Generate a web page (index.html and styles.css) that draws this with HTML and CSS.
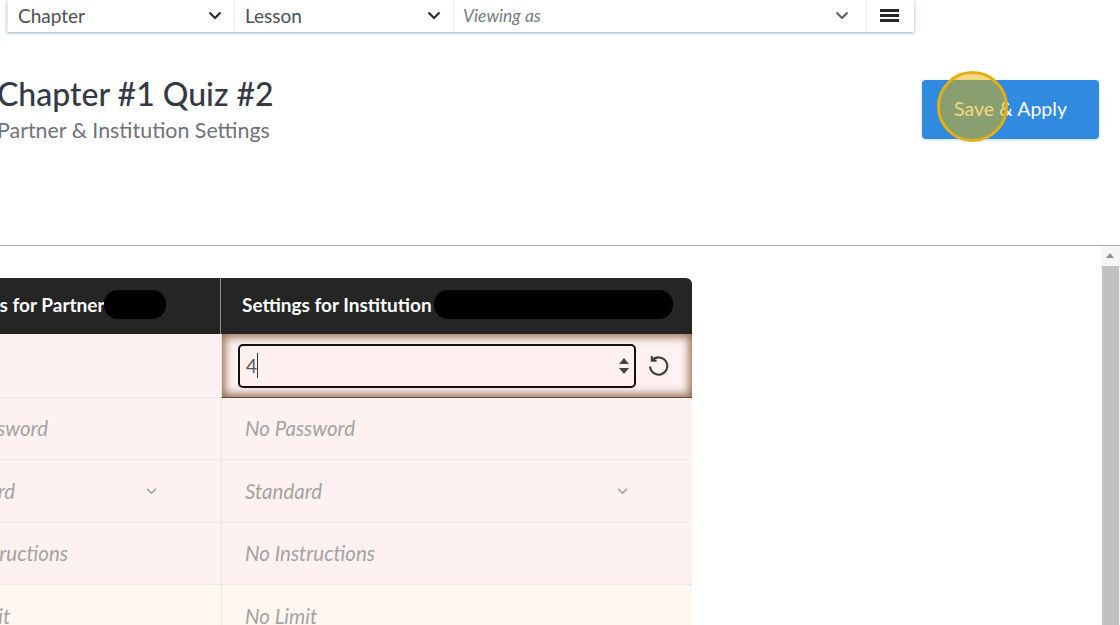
FILE: index.html
```html
<!DOCTYPE html>
<html>

<head>
    <link rel="stylesheet" href="styles.css">
</head>

<body>
    <div class="toolbar">
        <div class="tool-cell chapter-cell">
            <span>Chapter</span>
            <svg class="chev" viewBox="0 0 14 9"><path d="M1.5 1.5 7 7l5.5-5.5"/></svg>
        </div>
        <div class="tool-cell lesson-cell">
            <span>Lesson</span>
            <svg class="chev" viewBox="0 0 14 9"><path d="M1.5 1.5 7 7l5.5-5.5"/></svg>
        </div>
        <div class="tool-cell viewing-cell">
            <span class="viewing">Viewing as</span>
            <svg class="chev chev-gray" viewBox="0 0 14 9"><path d="M1.5 1.5 7 7l5.5-5.5"/></svg>
        </div>
        <div class="tool-cell menu-cell">
            <div class="burger"><i></i><i></i><i></i></div>
        </div>
    </div>

    <div class="page-head">
        <div class="titles">
            <h1>Chapter #1 Quiz #2</h1>
            <p>Partner &amp; Institution Settings</p>
        </div>
        <button class="save-btn">Save &amp; Apply<span class="click-mark"></span></button>
    </div>

    <div class="scroll-area">
        <div class="table-wrap">
            <div class="settings-table">
                <div class="th th-partner"><span>Settings for Partner</span><b class="redact redact-small"></b></div>
                <div class="th th-inst"><span>Settings for Institution</span><b class="redact redact-big"></b></div>

                <div class="td rose"></div>
                <div class="td rose td-focus">
                    <div class="num-input">
                        <span class="num-value">4</span>
                        <svg class="spin" viewBox="0 0 12 20"><path d="M6 2 11 8H1zM6 18 1 12h10z"/></svg>
                    </div>
                    <svg class="reset" viewBox="0 0 24 24"><path d="M5.5 6.5A9 9 0 1 1 3.2 13"/><path d="M5 2v5h5"/></svg>
                </div>

                <div class="td rose muted">No Password</div>
                <div class="td rose muted">No Password</div>

                <div class="td rose muted select-cell">Standard<svg class="chev chev-small" viewBox="0 0 14 9"><path d="M2 2 7 7l5-5"/></svg></div>
                <div class="td rose muted select-cell">Standard<svg class="chev chev-small" viewBox="0 0 14 9"><path d="M2 2 7 7l5-5"/></svg></div>

                <div class="td rose muted">No Instructions</div>
                <div class="td rose muted">No Instructions</div>

                <div class="td cream muted">No Limit</div>
                <div class="td cream muted">No Limit</div>
            </div>
        </div>
        <div class="scrollbar">
            <div class="scroll-up"></div>
            <div class="scroll-thumb"></div>
        </div>
    </div>
</body>

</html>
```

FILE: styles.css
```css
* {
    box-sizing: border-box;
}

html,
body {
    height: 100%;
}

body {
    margin: 0;
    overflow: hidden;
    background-color: white;
    font-family: Lato, "Open Sans", sans-serif;
    display: flex;
    flex-direction: column;
}

/* top bar */
.toolbar {
    display: flex;
    width: 907px;
    height: 32px;
    margin-left: 7px;
    flex: none;
    background-color: white;
    box-shadow: 0 1px 3px rgba(70, 100, 130, 0.55);
}

.tool-cell {
    display: flex;
    align-items: center;
    justify-content: space-between;
    height: 31px;
    padding-bottom: 1px;
    border-left: 1px solid #e9ecef;
    color: #4c4f54;
    font-size: 19px;
}

.chapter-cell {
    width: 227px;
    padding: 0 12px 1px 10px;
}

.lesson-cell {
    width: 219px;
    padding: 0 12px 1px 10px;
}

.viewing-cell {
    width: 413px;
    padding: 0 17px 1px 9px;
}

.menu-cell {
    width: 48px;
    justify-content: center;
}

.viewing {
    font-size: 17.5px;
    font-style: italic;
    color: #777a80;
}

.chev {
    width: 14px;
    height: 9px;
    fill: none;
    stroke: #2b2b2b;
    stroke-width: 2.2;
}

.chev-gray {
    stroke: #60646a;
}

.chev-small {
    width: 13px;
    height: 8px;
    stroke: #a09b9b;
    stroke-width: 1.8;
}

.burger {
    width: 19px;
    margin-right: 2px;
}

.burger i {
    display: block;
    height: 3px;
    margin: 2px 0;
    background-color: #26282c;
}

/* title and button */
.page-head {
    display: flex;
    justify-content: space-between;
    height: 214px;
    flex: none;
    margin-left: -3px;
    padding: 41px 21px 0 0;
    border-bottom: 1px solid #a9a9a9;
}

h1 {
    margin: 0;
    font-size: 32px;
    line-height: 41px;
    font-weight: 500;
    color: #333945;
}

.titles p {
    margin: 0;
    padding-top: 1px;
    font-size: 21.4px;
    line-height: 30px;
    color: #6f7278;
}

.save-btn {
    position: relative;
    width: 177px;
    height: 59px;
    margin-top: 7px;
    padding: 0 0 2px;
    border: none;
    border-radius: 4px;
    background-color: #2f8ae0;
    box-shadow: 0 1px 3px rgba(47, 138, 224, 0.3);
    color: white;
    font-family: inherit;
    font-size: 19.5px;
}

.click-mark {
    position: absolute;
    left: 15px;
    top: -9px;
    width: 71px;
    height: 71px;
    border: 3px solid #e4ae14;
    border-radius: 50%;
    background-color: rgba(229, 180, 0, 0.5);
}

/* table part */
.scroll-area {
    display: flex;
    flex: 1;
    min-height: 0;
}

.table-wrap {
    flex: 1;
    min-width: 0;
    padding-top: 32px;
    overflow: hidden;
}

.settings-table {
    display: grid;
    grid-template-columns: 306px 471px;
    grid-template-rows: 56px 64px 62px 63px 62px 63px;
    width: 777px;
    margin-left: -85px;
}

.th {
    display: flex;
    align-items: center;
    padding-bottom: 4px;
    background-color: #252525;
    color: white;
    font-size: 19px;
    font-weight: 700;
}

.th-partner {
    padding-left: 25px;
    border-right: 1px solid #8f8f8f;
}

.th-inst {
    padding-left: 21px;
    border-top-right-radius: 6px;
}

.redact {
    display: block;
    height: 29px;
    border-radius: 14px;
    background-color: black;
}

.redact-small {
    width: 62px;
}

.redact-big {
    width: 239px;
    margin-left: 2px;
}

.td {
    display: flex;
    align-items: center;
    padding-left: 23px;
    padding-bottom: 1px;
    border-bottom: 1px solid #f1e6e6;
    font-size: 20.5px;
}

.td:nth-child(even) {
    border-left: 1px solid #eee4e4;
}

.rose {
    background-color: #fdf2f1;
}

.cream {
    background-color: #fff8f0;
}

.muted {
    color: #a5a2a3;
    font-style: italic;
}

.select-cell {
    justify-content: space-between;
    padding-right: 63px;
}

.td-focus {
    padding-left: 16px;
    padding-bottom: 0;
    border-bottom: 1px solid #6a4a30;
    box-shadow: inset 0 0 8px 3px rgba(110, 60, 20, 0.72);
}

.num-input {
    display: flex;
    align-items: center;
    justify-content: space-between;
    width: 398px;
    height: 44px;
    padding: 0 4px 0 6px;
    border: 2.5px solid #111;
    border-radius: 5px;
    background-color: #fdf0ef;
}

.num-value {
    padding-right: 0;
    border-right: 1px solid #333;
    line-height: 25px;
    color: #555;
    font-size: 19px;
}

.spin {
    width: 12px;
    height: 20px;
    fill: #444;
}

.reset {
    width: 23px;
    height: 23px;
    margin-left: 11px;
    fill: none;
    stroke: #3c3c3c;
    stroke-width: 2.1;
}

/* scrollbar on the right */
.scrollbar {
    display: flex;
    flex-direction: column;
    flex: none;
    width: 19px;
    background-color: #f5f5f5;
}

.scroll-up {
    height: 20px;
    flex: none;
    position: relative;
}

.scroll-up::after {
    content: "";
    position: absolute;
    left: 5px;
    top: 7px;
    border-left: 4px solid transparent;
    border-right: 4px solid transparent;
    border-bottom: 5px solid #8f8f8f;
}

.scroll-thumb {
    flex: 1;
    margin: 0 1px;
    background-color: #c1c1c1;
}
```
